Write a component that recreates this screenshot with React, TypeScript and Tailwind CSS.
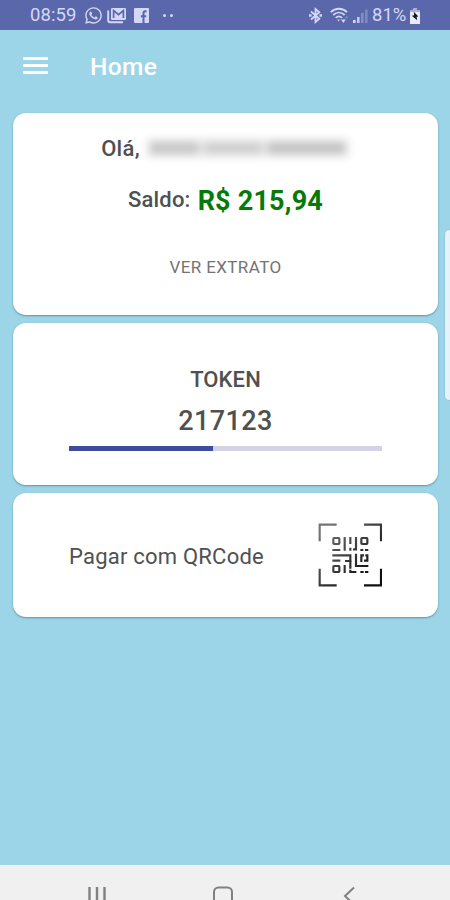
import React from 'react';
import { FaWhatsapp } from 'react-icons/fa';

const StatusBar: React.FC = () => (
  <div className="h-[30px] shrink-0 bg-[#5a67aa] text-[#d3d8f6] flex items-center pl-[30px] pr-[30px] pt-[1px]">
    <span className="w-[46px] text-[18.5px] leading-[29px] tracking-[0.1px] whitespace-nowrap">08:59</span>
    <FaWhatsapp className="ml-[8px] w-[19px] h-[19px]" />
    {/* Stacked mail notification */}
    <svg className="ml-[4px] w-[20px] h-[17px]" viewBox="0 0 20 17" fill="none">
      <path d="M1.2 3.5v9.8a2 2 0 0 0 2 2H16" stroke="currentColor" strokeWidth="2" />
      <rect x="4" y="1" width="15" height="12" rx="1.2" fill="currentColor" />
      <path d="M6.6 11V3.6l4.9 4 4.9-4V11" stroke="#5a67aa" strokeWidth="1.7" />
    </svg>
    <svg className="ml-[7px] w-[15px] h-[15px]" viewBox="0 0 15 15">
      <rect width="15" height="15" rx="1" fill="currentColor" />
      <path d="M12.6 3.2h-1.2c-1.3 0-1.9.7-1.9 2V15M6.8 8.2h5.4" fill="none" stroke="#5a67aa" strokeWidth="2" />
    </svg>
    <span className="ml-[14px] flex gap-[4px]">
      <i className="w-[3px] h-[3px] rounded-full bg-current" />
      <i className="w-[3px] h-[3px] rounded-full bg-current" />
    </span>
    <div className="ml-auto flex items-center">
      <svg className="w-[15px] h-[17px]" viewBox="0 0 15 17" fill="none" stroke="currentColor" strokeWidth="1.8">
        <path d="M3 4.5l8.3 7.3L7.5 15V2l3.8 3.2L3 12.5" />
        <path d="M1 8.5h2.6M11.4 8.5H14" strokeWidth="2.4" />
      </svg>
      <svg className="ml-[7px] w-[19px] h-[17px]" viewBox="0 0 19 17" fill="none" stroke="currentColor" strokeWidth="1.8">
        <path d="M.8 5.2c4.6-4.6 11.6-4.6 16.2 0" />
        <path d="M3.2 8c3.4-3.2 8-3.2 11.4 0" />
        <path d="M5.7 10.8c2-1.8 4.4-1.8 6.4 0" />
        <path d="M7.2 12.4h2.8l-1.4 2z" fill="currentColor" stroke="none" />
        <path d="M11 12.6h4.8L13.4 16z" fill="currentColor" stroke="none" />
        <path d="M15 11.2l1.6-2.2 1.6 2.2z" fill="currentColor" stroke="none" opacity=".4" />
      </svg>
      <svg className="ml-[4px] w-[15px] h-[14px]" viewBox="0 0 15 14" fill="currentColor">
        <rect x="0" y="11" width="2.6" height="3" />
        <rect x="4" y="8" width="2.6" height="6" opacity=".85" />
        <rect x="8" y="4" width="2.6" height="10" opacity=".35" />
        <rect x="12" y="0.5" width="2.6" height="13.5" opacity=".3" />
      </svg>
      <span className="ml-[4px] w-[35px] text-[18.5px] leading-[29px] whitespace-nowrap">81%</span>
      <svg className="ml-[3px] w-[10px] h-[16px]" viewBox="0 0 10 16">
        <path d="M3 0h4v2h3v3H0V2h3z" fill="#a9b0d8" />
        <path d="M0 4h10v12H0z" fill="#e8ebfb" />
        <path d="M3.8 3.8l4.6 4.6-1.8.3.6 3.6-5.4-4.6 2.4-.4z" fill="#15171f" />
      </svg>
    </div>
  </div>
);

const QrIcon: React.FC = () => (
  <svg className="w-[64px] h-[64px]" viewBox="0 0 192 192" fill="none" strokeWidth="6.5">
    <defs>
      <linearGradient id="ink" gradientUnits="userSpaceOnUse" x1="20" y1="20" x2="150" y2="150">
        <stop offset="0" stopColor="#757575" />
        <stop offset="1" stopColor="#101010" />
      </linearGradient>
    </defs>
    <g stroke="url(#ink)">
      <path d="M5 55V5h51M138 5h51v50M5 137v50h51M138 187h51v-50" />
      <rect x="46" y="45" width="18" height="18" rx="2" />
      <rect x="130" y="45" width="18" height="18" rx="2" />
      <rect x="46" y="129" width="18" height="18" rx="2" />
      <path d="M80 42v41M97 42v21M97 74v9M114 42v37h-9" />
      <path d="M43 81h24M127 81h9M141 81h10" />
      <path d="M43 97h54v17H81M43 113h24" />
      <path d="M114 92v37h37M97 113v18M130 117V97h8M142 97h6v16h-10" />
      <path d="M80 126v24M97 130v7M97 140v7h18M127 147h10M141 147h10" />
    </g>
  </svg>
);

const Card: React.FC<{ className: string; children: React.ReactNode }> = ({ className, children }) => (
  <section className={`bg-white rounded-[13px] shadow-[0_1px_2px_rgba(40,80,100,0.5)] ${className}`}>{children}</section>
);

const App: React.FC = () => {
  return (
    <div className="relative w-[450px] h-[900px] overflow-hidden flex flex-col bg-[#9dd5e8] font-[Roboto,sans-serif] text-[#505050]">
      <StatusBar />

      <header className="h-[83px] shrink-0 flex items-start pl-[23px] pt-[22px] text-white">
        <div className="w-[25px] mt-[5px] flex flex-col gap-[4px]">
          <i className="h-[3px] rounded-[1px] bg-white" />
          <i className="h-[3px] rounded-[1px] bg-white" />
          <i className="h-[3px] rounded-[1px] bg-white" />
        </div>
        <h1 className="ml-[42px] text-[24.5px] leading-[30px] font-medium tracking-[0.4px]">Home</h1>
      </header>

      <main className="flex-1 pl-[13px] pr-[12px] flex flex-col gap-[8px]">
        <Card className="h-[202px] flex flex-col items-center">
          <div className="mt-[20px] flex items-center h-[30px]">
            <span className="text-[22px] font-medium tracking-[0.3px]">Olá,</span>
            {/* Hidden customer name */}
            <span className="ml-[6px] w-[204px] h-[20px] bg-[#f0f0f0] flex items-center gap-[5px] px-[4px] blur-[4px]">
              <i className="w-[49px] h-[12px] bg-[#c6c6c6]" />
              <i className="w-[58px] h-[12px] bg-[#cecece]" />
              <i className="w-[78px] h-[12px] bg-[#c2c2c2]" />
            </span>
          </div>
          <div className="mt-[22px] flex items-center h-[30px] leading-[30px] whitespace-nowrap">
            <span className="text-[22px] font-medium tracking-[0.2px]">Saldo:</span>
            <span className="ml-[7px] pt-[1px] text-[27px] font-bold tracking-[0.2px] text-[#067a06]">R$ 215,94</span>
          </div>
          <button className="mt-[40px] text-[17px] leading-[24px] tracking-[0.4px] text-[#737373]">VER EXTRATO</button>
        </Card>

        <Card className="h-[162px] flex flex-col items-center">
          <span className="mt-[42px] text-[22px] leading-[30px] font-medium tracking-[0.1px]">TOKEN</span>
          <span className="mt-[11px] text-[27px] leading-[30px] font-medium tracking-[0.4px]">217123</span>
          <div className="mt-[10px] w-[313px] h-[5px] bg-[#d3d3e8]">
            <div className="w-[46%] h-full bg-[#3f4b9d]" />
          </div>
        </Card>

        <Card className="h-[124px] flex items-center justify-between pl-[56px] pr-[56px]">
          <span className="pt-[3px] text-[22px] leading-[30px] tracking-[0.22px] whitespace-nowrap">Pagar com QRCode</span>
          <QrIcon />
        </Card>
      </main>

      <nav className="h-[35px] shrink-0 bg-[#f0f0f0] overflow-hidden flex pl-[87px] pt-[21px] text-[#808080]">
        <svg className="w-[20px] h-[20px]" viewBox="0 0 20 20" stroke="currentColor" strokeWidth="2.4">
          <path d="M2.5 1v18M10 1v18M17.5 1v18" />
        </svg>
        <svg className="ml-[106px] w-[20px] h-[20px]" viewBox="0 0 20 20" fill="none" stroke="currentColor" strokeWidth="2">
          <rect x="1" y="1.5" width="18" height="18" rx="4.5" />
        </svg>
        <svg className="ml-[110px] w-[12px] h-[20px]" viewBox="0 0 12 20" fill="none" stroke="currentColor" strokeWidth="2">
          <path d="M11 1.5L2 10l9 8.5" />
        </svg>
      </nav>

      {/* Edge panel handle */}
      <div className="absolute left-[444px] top-[229px] w-[10px] h-[172px] rounded-[5px] bg-[#e3f2fb] border border-[#93c6d9]" />
    </div>
  );
};

export default App;
